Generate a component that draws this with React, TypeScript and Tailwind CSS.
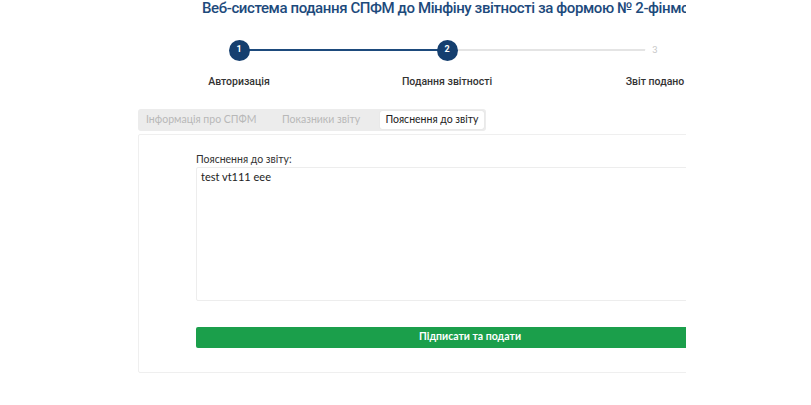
import React from 'react';

const steps = [
    { n: 1, label: 'Авторизація', done: true },
    { n: 2, label: 'Подання звітності', done: true },
    { n: 3, label: 'Звіт подано', done: false },
];

const tabs = ['Інформація про СПФМ', 'Показники звіту', 'Пояснення до звіту'];

const App: React.FC = () => {
    return (
        <div className="w-[811px] h-[405px] bg-white font-['Roboto',sans-serif] overflow-hidden">
            <div className="w-[686px] h-full overflow-hidden">
                <div className="w-[811px]">
                    {/* Title */}
                    <h1 className="pl-[202px] h-[20px] text-[15px] leading-[16px] font-medium tracking-[-0.4px] text-[#1d4a7c] whitespace-nowrap">
                        Веб-система подання СПФМ до Мінфіну звітності за формою № 2-фінмоніторинг
                    </h1>

                    {/* Stepper */}
                    <div className="ml-[135px] mt-[19px] w-[624px] grid grid-cols-3">
                        {steps.map((s, i) => (
                            <div key={s.n} className="flex flex-col items-center">
                                <div className="relative w-full h-[22px] flex items-center justify-center">
                                    {i > 0 && (
                                        <div className={`absolute left-0 right-1/2 top-[10px] h-[2px] ${s.done ? 'bg-[#1d4a7c]' : 'bg-[#e4e4e4]'}`} />
                                    )}
                                    {i < steps.length - 1 && (
                                        <div className={`absolute left-1/2 right-0 top-[10px] h-[2px] ${steps[i + 1].done ? 'bg-[#1d4a7c]' : 'bg-[#e4e4e4]'}`} />
                                    )}
                                    {s.done ? (
                                        <div className="relative z-10 w-[21px] h-[21px] rounded-full bg-[#153f6f] text-white text-[9px] font-bold flex items-center justify-center">
                                            {s.n}
                                        </div>
                                    ) : (
                                        <div className="relative z-10 w-[21px] h-[21px] rounded-full bg-white text-[#c8c8c8] text-[9.5px] flex items-center justify-center">
                                            {s.n}
                                        </div>
                                    )}
                                </div>
                                <div className="mt-[13px] text-[10.5px] font-medium text-[#333] whitespace-nowrap">{s.label}</div>
                            </div>
                        ))}
                    </div>

                    {/* Tabs */}
                    <div className="ml-[138px] mt-[19px] w-[348px] h-[22px] bg-[#ececec] rounded-[3px] flex items-center px-[2px] font-['Lato',sans-serif] text-[10.5px]">
                        <div className="pl-[6px] w-[136px] text-[#b8b8b8] whitespace-nowrap">{tabs[0]}</div>
                        <div className="pl-[6px] w-[104px] text-[#b8b8b8] whitespace-nowrap">{tabs[1]}</div>
                        <div className="h-[18px] flex-1 bg-white rounded-[2px] flex items-center justify-center text-[#222] whitespace-nowrap shadow-[0_0_1px_rgba(0,0,0,0.15)]">
                            {tabs[2]}
                        </div>
                    </div>

                    {/* Card */}
                    <div className="ml-[138px] mt-[3px] w-[664px] h-[239px] border border-[#efefef] rounded-[2px] pl-[57px] pr-[57px] pt-[17px] font-['Lato',sans-serif]">
                        <div className="text-[10.5px] text-[#333] leading-[14px]">Пояснення до звіту:</div>
                        <div className="mt-[1px] h-[134px] border border-[#ededed] rounded-[2px] px-[4px] pt-[1px] text-[11px] text-[#222]">
                            test vt111 eee
                        </div>
                        <button className="mt-[26px] w-full h-[21px] bg-[#1b9f4b] rounded-[2px] text-white text-[10.5px] font-bold flex items-center justify-center">
                            Підписати та подати
                        </button>
                    </div>
                </div>
            </div>
        </div>
    );
};

export default App;
